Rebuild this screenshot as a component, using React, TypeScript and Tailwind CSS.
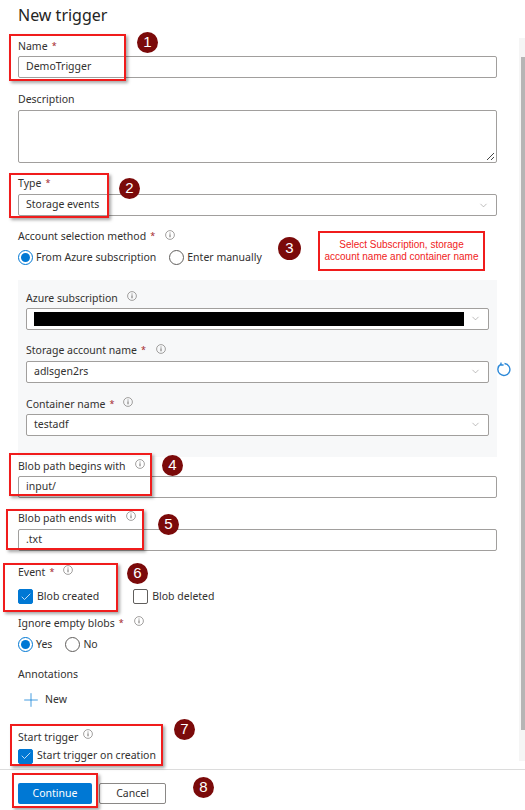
import React from "react";
import { Plus, Check, ChevronDown } from "lucide-react";

const font = { fontFamily: '"Noto Sans", "Open Sans", sans-serif' };

function Info({ className = "" }: { className?: string }) {
  return (
    <svg width="10" height="10" viewBox="0 0 10 10" className={className}>
      <circle cx="5" cy="5" r="4.4" fill="none" stroke="#8a8886" strokeWidth="0.8" />
      <path d="M5 4.3v3M5 2.6v.9" stroke="#605e5c" strokeWidth="0.9" />
    </svg>
  );
}

function Label({ text, req, info, infoClass = "ml-2 -mt-[3px]" }: { text: string; req?: boolean; info?: boolean; infoClass?: string }) {
  return (
    <div className="flex items-center h-[16px] text-[10.5px] leading-[16px] text-[#323130]">
      <span>{text}</span>
      {req && <span className="ml-[4px] text-[9px] text-[#a4262c]">*</span>}
      {info && <Info className={infoClass} />}
    </div>
  );
}

function Field({ value, select, className = "" }: { value?: string; select?: boolean; className?: string }) {
  return (
    <div className={`flex items-center h-[22px] border border-[#a19f9d] rounded-[2px] bg-white pl-[7px] pr-[7px] text-[10.5px] text-[#323130] ${className}`}>
      <span className="flex-1">{value}</span>
      {select && <ChevronDown size={11} strokeWidth={1.2} color="#8a8886" />}
    </div>
  );
}

function Radio({ label, on }: { label: string; on?: boolean }) {
  return (
    <div className="flex items-center gap-[3px] text-[10.5px] text-[#323130]">
      <span className={`flex items-center justify-center w-[15px] h-[15px] rounded-full border ${on ? "border-[#0078d4]" : "border-[#605e5c]"}`}>
        {on && <span className="w-[9px] h-[9px] rounded-full bg-[#0078d4]" />}
      </span>
      {label}
    </div>
  );
}

function Checkbox({ label, on }: { label: string; on?: boolean }) {
  return (
    <div className="flex items-center gap-[4px] text-[10.5px] text-[#323130]">
      <span className={`flex items-center justify-center w-[15px] h-[15px] rounded-[2px] border ${on ? "border-[#0078d4] bg-[#0078d4]" : "border-[#605e5c] bg-white"}`}>
        {on && <Check size={12} strokeWidth={1.5} color="white" />}
      </span>
      {label}
    </div>
  );
}

function RedBox({ className }: { className: string }) {
  return <div className={`absolute border-2 border-[#f01c1c] shadow-[2px_2px_3px_rgba(0,0,0,0.35)] ${className}`} />;
}

function Step({ n, className }: { n: number; className: string }) {
  return (
    <div className={`absolute flex items-center justify-center rounded-full bg-[#7b0a0a] text-white text-[15px] font-['Liberation_Sans',sans-serif] ${className}`}>
      {n}
    </div>
  );
}

export default function App() {
  return (
    <div className="relative w-[525px] h-[810px] overflow-hidden bg-white" style={font}>
      <div className="flex h-full flex-col">
        <div className="flex flex-1 min-h-0">
          <div className="w-[519px] pl-[18px] pr-[22px]">
            <h1 className="pt-[3px] h-[38px] text-[16px] leading-[24px] text-[#252423]">New trigger</h1>

            <Label text="Name" req />
            <Field value="DemoTrigger" className="mt-[2px]" />

            <div className="mt-[13px]"><Label text="Description" /></div>
            <div className="relative mt-[3px] h-[53px] border border-[#a19f9d] rounded-[2px]">
              <svg width="9" height="9" viewBox="0 0 9 9" className="absolute right-[1px] bottom-[1px]">
                <path d="M1 8L8 1M5 8L8 5" stroke="#444" strokeWidth="1" />
              </svg>
            </div>

            <div className="mt-[12px]"><Label text="Type" req /></div>
            <Field value="Storage events" select className="mt-[3px]" />

            <div className="mt-[12px]"><Label text="Account selection method" req info infoClass="ml-[10px] -mt-[2px]" /></div>
            <div className="mt-[6px] flex gap-[13px]">
              <Radio label="From Azure subscription" on />
              <Radio label="Enter manually" />
            </div>

            <div className="mt-[14px] h-[177px] bg-[#f7f8f9] px-[8px] pt-[10px]">
              <Label text="Azure subscription" info infoClass="ml-[9px] -mt-[3px]" />
              <div className="mt-[2px] flex items-center h-[22px] border border-[#a19f9d] rounded-[2px] bg-white pl-[7px] pr-[7px]">
                <div className="w-[430px] h-[14px] bg-black" />
                <div className="flex-1" />
                <ChevronDown size={11} strokeWidth={1.2} color="#8a8886" />
              </div>
              <div className="mt-[12px]"><Label text="Storage account name" req info infoClass="ml-[10px] -mt-[2px]" /></div>
              <Field value="adlsgen2rs" select className="mt-[3px]" />
              <div className="mt-[13px]"><Label text="Container name" req info infoClass="ml-[9px] -mt-[3px]" /></div>
              <Field value="testadf" select className="mt-[2px]" />
            </div>

            <div className="mt-[1px]"><Label text="Blob path begins with" info infoClass="ml-[10px] -mt-[3px]" /></div>
            <Field value="input/" className="mt-[2px]" />

            <div className="mt-[12px]"><Label text="Blob path ends with" info infoClass="ml-[10px] -mt-[3px]" /></div>
            <Field value=".txt" className="mt-[3px]" />

            <div className="mt-[13px]"><Label text="Event" req info infoClass="ml-[9px] -mt-[3px]" /></div>
            <div className="mt-[9px] flex gap-[34px]">
              <Checkbox label="Blob created" on />
              <Checkbox label="Blob deleted" />
            </div>

            <div className="mt-[10px]"><Label text="Ignore empty blobs" req info infoClass="ml-[10px] -mt-[3px]" /></div>
            <div className="mt-[6px] flex gap-[13px]">
              <Radio label="Yes" on />
              <Radio label="No" />
            </div>

            <div className="mt-[14px]"><Label text="Annotations" /></div>
            <div className="mt-[7px] ml-[2px] flex items-center gap-[3px] text-[10.5px] text-[#323130]">
              <Plus size={22} strokeWidth={0.8} color="#0078d4" />
              New
            </div>

            <div className="mt-[18px]"><Label text="Start trigger" info infoClass="ml-[5px] -mt-[7px]" /></div>
            <div className="mt-[3px]"><Checkbox label="Start trigger on creation" on /></div>
          </div>
          <div className="flex-1 pt-[38px] pb-[8px]">
            <div className="h-full bg-[#f5f5f5] pt-[19px] pb-[31px] pl-[2px]">
              <div className="h-full w-[4px] bg-[#b5b5b5]" />
            </div>
          </div>
        </div>

        <div className="flex h-[41px] items-start gap-[7px] border-t border-[#dcdcdc] pl-[18px] pt-[13px] text-[10.5px]">
          <div className="flex items-center justify-center w-[74px] h-[21px] rounded-[2px] bg-[#0078d4] text-white">Continue</div>
          <div className="flex items-center justify-center w-[67px] h-[21px] rounded-[2px] border border-[#8a8886] text-[#323130]">Cancel</div>
        </div>
      </div>

      <div className="absolute left-[497px] top-[362px]">
        <svg width="15" height="15" viewBox="0 0 15 15" fill="none">
          <path d="M4 2.2A6 6 0 1 0 7.5 1.5" stroke="#2b88d8" strokeWidth="1.4" />
          <path d="M4 0.5V3H6.6" stroke="#2b88d8" strokeWidth="1.3" />
        </svg>
      </div>

      <RedBox className="left-[9px] top-[34px] w-[117px] h-[47px]" />
      <RedBox className="left-[9px] top-[173px] w-[100px] h-[45px]" />
      <RedBox className="left-[9px] top-[453px] w-[143px] h-[43px]" />
      <RedBox className="left-[6px] top-[509px] w-[138px] h-[41px]" />
      <RedBox className="left-[3px] top-[563px] w-[115px] h-[49px]" />
      <RedBox className="left-[10px] top-[724px] w-[153px] h-[42px]" />
      <RedBox className="left-[12px] top-[773px] w-[86px] h-[35px]" />

      <div className="absolute left-[318px] top-[231px] flex h-[40px] w-[167px] items-center justify-center border-2 border-[#f01c1c] text-center text-[10px] leading-[12px] text-[#f01c1c] font-['Liberation_Sans',sans-serif]">
        Select Subscription, storage<br />account name and container name
      </div>

      <Step n={1} className="left-[137px] top-[32px] w-[21px] h-[21px]" />
      <Step n={2} className="left-[119px] top-[178px] w-[21px] h-[21px]" />
      <Step n={3} className="left-[278px] top-[237px] w-[23px] h-[23px]" />
      <Step n={4} className="left-[162px] top-[455px] w-[21px] h-[21px]" />
      <Step n={5} className="left-[158px] top-[514px] w-[21px] h-[21px]" />
      <Step n={6} className="left-[127px] top-[563px] w-[21px] h-[21px]" />
      <Step n={7} className="left-[174px] top-[719px] w-[21px] h-[21px]" />
      <Step n={8} className="left-[193px] top-[777px] w-[21px] h-[21px]" />
    </div>
  );
}
